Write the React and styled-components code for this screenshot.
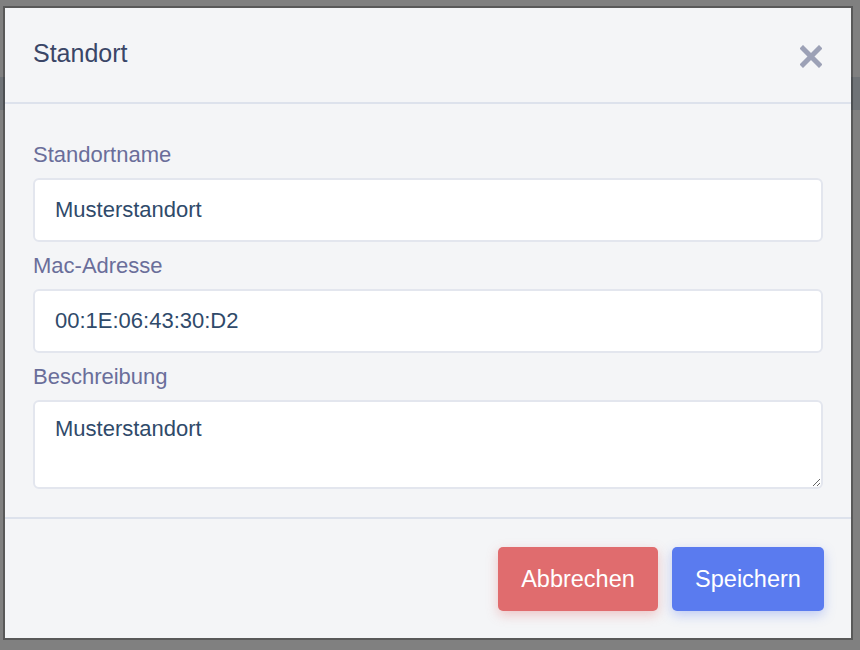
import React, { useState } from 'react';
import styled, { createGlobalStyle } from 'styled-components';

const GlobalStyle = createGlobalStyle`
  * { box-sizing: border-box; }
  html, body {
    margin: 0;
    padding: 0;
    font-family: "Liberation Sans", Arial, Helvetica, sans-serif;
  }
  body {
    background: linear-gradient(
      to bottom,
      #808080 0,
      #808080 77px,
      #6f7377 77px,
      #6f7377 110px,
      #808080 110px
    );
    min-height: 650px;
  }
`;

const Overlay = styled.div`
  display: flex;
  align-items: flex-start;
  padding: 8px 9px 12px 5px;
  min-height: 650px;
`;

const Modal = styled.div`
  width: 846px;
  background: #f4f5f7;
  box-shadow: 0 0 0 2px rgba(0, 0, 0, 0.3);
  display: flex;
  flex-direction: column;
`;

const Header = styled.div`
  height: 96px;
  padding: 0 29px 2px 28px;
  display: flex;
  align-items: center;
  justify-content: space-between;
  border-bottom: 2px solid #dde2ec;
`;

const Title = styled.h2`
  margin: 0 0 2px;
  font-size: 25px;
  font-weight: 400;
  color: #3a4667;
`;

const CloseButton = styled.button`
  border: none;
  background: none;
  padding: 0;
  margin-top: 5px;
  width: 22px;
  height: 23px;
  cursor: pointer;
  display: flex;
`;

const Body = styled.div`
  padding: 38px 28px 28px;
  display: flex;
  flex-direction: column;
`;

const Field = styled.div`
  display: flex;
  flex-direction: column;
  gap: 10px;
  & + & {
    margin-top: 11px;
  }
`;

const Label = styled.label`
  font-size: 22px;
  line-height: 26px;
  color: #6a6e9a;
`;

const Input = styled.input`
  height: 64px;
  width: 100%;
  border: 2px solid #e3e6ee;
  border-radius: 6px;
  background: #fff;
  padding: 0 20px;
  font-family: inherit;
  font-size: 22px;
  color: #2f4a6a;
  outline: none;
`;

const TextArea = styled.textarea`
  height: 89px;
  width: 100%;
  border: 2px solid #e3e6ee;
  border-radius: 6px;
  background: #fff;
  padding: 14px 20px 10px;
  font-family: inherit;
  font-size: 22px;
  line-height: 26px;
  color: #2f4a6a;
  resize: vertical;
  outline: none;
`;

const Footer = styled.div`
  border-top: 2px solid #dde2ec;
  padding: 28px 27px 27px;
  display: flex;
  justify-content: flex-end;
  gap: 14px;
`;

const Button = styled.button`
  height: 64px;
  width: ${(p) => p.$width}px;
  border: none;
  border-radius: 5px;
  font-family: inherit;
  font-size: 23.5px;
  color: #fff;
  cursor: pointer;
  background: ${(p) => (p.$variant === 'danger' ? '#e06c6e' : '#5a7bef')};
  box-shadow: 0 4px 12px
    ${(p) => (p.$variant === 'danger' ? 'rgba(224, 108, 110, 0.35)' : 'rgba(90, 123, 239, 0.35)')};
`;

function CloseIcon() {
  return (
    <svg width="22" height="23" viewBox="0 0 22 23">
      <path d="M3 3.5 L19 19.5 M19 3.5 L3 19.5" stroke="#9ca1b6" strokeWidth="5" strokeLinecap="square" />
    </svg>
  );
}

export default function App() {
  const [name, setName] = useState('Musterstandort');
  const [mac, setMac] = useState('00:1E:06:43:30:D2');
  const [desc, setDesc] = useState('Musterstandort');

  return (
    <>
      <GlobalStyle />
      <Overlay>
        <Modal>
          <Header>
            <Title>Standort</Title>
            <CloseButton aria-label="Schließen">
              <CloseIcon />
            </CloseButton>
          </Header>
          <Body>
            <Field>
              <Label>Standortname</Label>
              <Input value={name} onChange={(e) => setName(e.target.value)} />
            </Field>
            <Field>
              <Label>Mac-Adresse</Label>
              <Input value={mac} onChange={(e) => setMac(e.target.value)} />
            </Field>
            <Field>
              <Label>Beschreibung</Label>
              <TextArea value={desc} onChange={(e) => setDesc(e.target.value)} />
            </Field>
          </Body>
          <Footer>
            <Button $variant="danger" $width={160}>Abbrechen</Button>
            <Button $variant="primary" $width={152}>Speichern</Button>
          </Footer>
        </Modal>
      </Overlay>
    </>
  );
}
